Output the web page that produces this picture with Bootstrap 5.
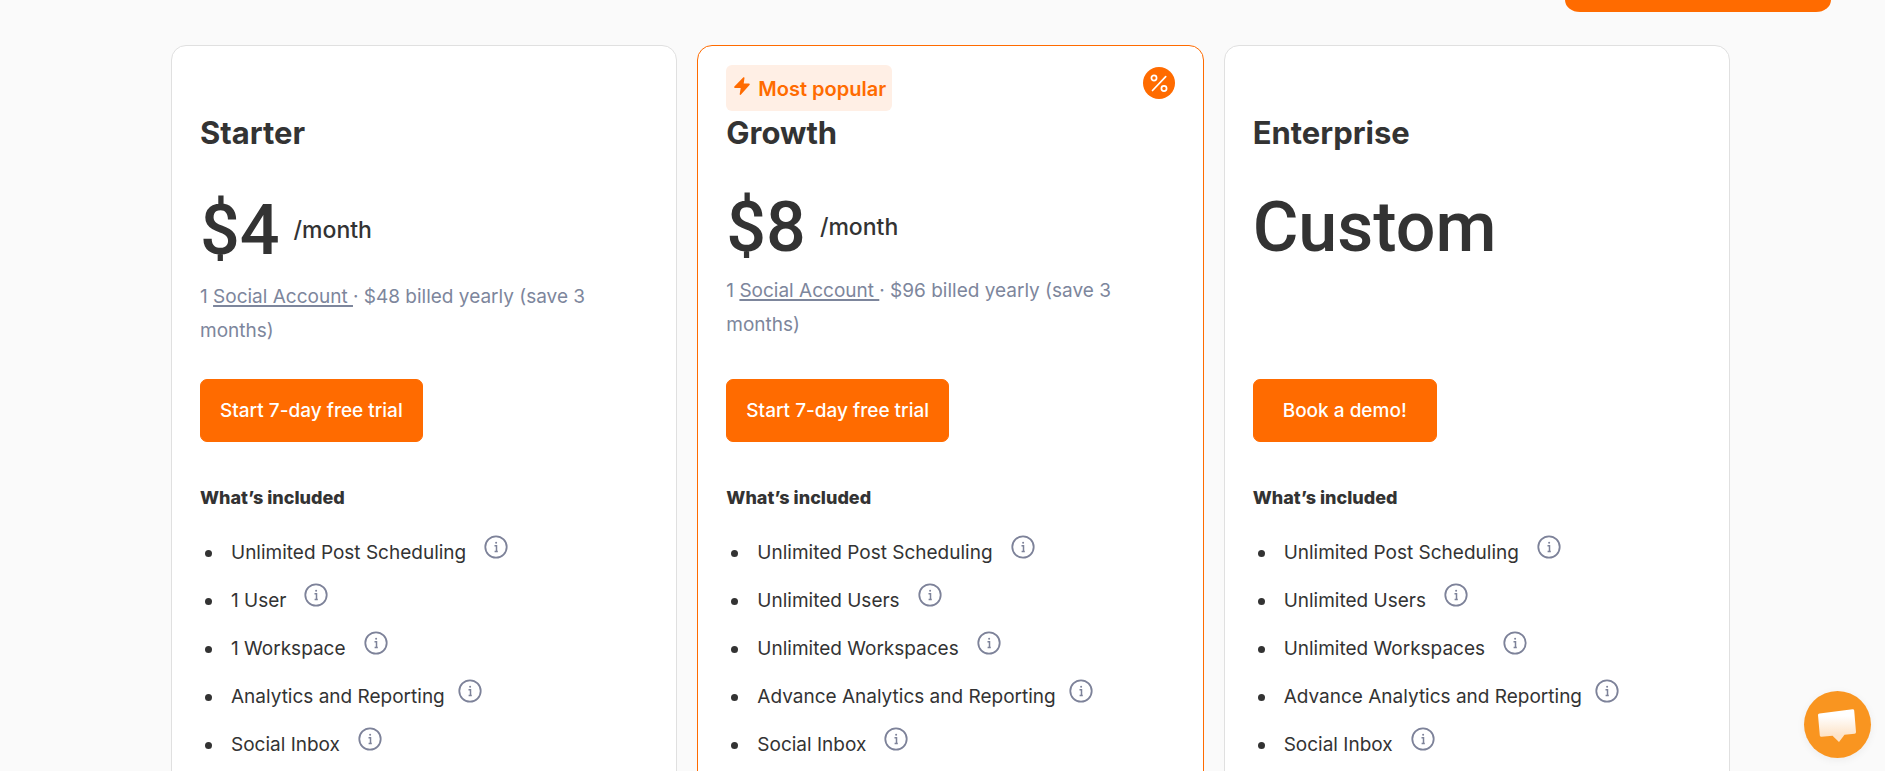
<!DOCTYPE html>
<html lang="en">
<head>
<meta charset="utf-8">
<meta name="viewport" content="width=device-width, initial-scale=1">
<title>Pricing plans</title>
<link href="https://cdn.jsdelivr.net/npm/bootstrap@5.3.0/dist/css/bootstrap.min.css" rel="stylesheet">
<style>
  :root { --brand: #ff6b00; --ink: #333; --muted: #7d869c; }
  body { background: #fafafa; color: var(--ink); font-family: Inter, "DM Sans", sans-serif; font-size: 19px; }
  .top-bar { padding-right: 54px; }
  .top-cta { width: 266px; height: 12px; padding: 0; background: var(--brand); border: 0; border-radius: 0 0 15px 15px / 0 0 12px 12px; }
  .plans { padding: 33px 155px 0 171px; }
  .plan-row { --bs-gutter-x: 20px; }
  .plan { border: 1px solid #e0e0e0; border-radius: 15px; padding: 19px 28px 60px; color: var(--ink); }
  .plan-popular { border-color: var(--brand); }
  .plan-head { height: 46px; margin-bottom: 4px; }
  .popular-tag { height: 46px; padding: 1px 6px 0 8px; gap: 8px; border-radius: 6px; background: #ffefe5; color: var(--brand); font-size: 20px; font-weight: 600; }
  .popular-tag svg { margin-bottom: 6px; }
  .discount { margin-top: 2px; }
  .plan-name { font-size: 31px; line-height: 36px; font-weight: 700; }
  .plan-offer { min-height: 228px; padding-top: 38px; }
  .plan-offer.roomy { padding-top: 41px; }
  .price { height: 76px; gap: 14px; margin-bottom: 9px; }
  .roomy .price { margin-bottom: 12px; }
  .price-amount { font-family: Roboto, sans-serif; font-size: 70px; line-height: 76px; font-weight: 500; }
  .price-period { font-size: 23px; line-height: 28px; font-weight: 500; }
  .plan-note { line-height: 34px; color: var(--muted); }
  .plan-note a { color: inherit; white-space: pre; text-underline-offset: 2px; text-decoration-thickness: 2px; }
  .btn-plan { --bs-btn-color: #fff; --bs-btn-bg: var(--brand); --bs-btn-border-color: var(--brand); --bs-btn-hover-color: #fff; --bs-btn-hover-bg: #e86100; --bs-btn-hover-border-color: #e86100; --bs-btn-border-radius: 7px; --bs-btn-font-size: 19px; --bs-btn-font-weight: 500; --bs-btn-padding-x: 19px; --bs-btn-padding-y: 17px; --bs-btn-line-height: 27px; }
  .btn-wide { --bs-btn-padding-x: 29px; }
  .included { margin: 42px 0 17px; font-size: 18px; line-height: 28px; font-weight: 800; }
  .features li { display: flex; align-items: center; height: 48px; padding-left: 5px; }
  .features li::before { content: ""; width: 7px; height: 7px; margin-right: 19px; border-radius: 50%; background: var(--ink); }
  .info { margin: 0 0 13px 18px; }
  .info-near { margin-left: 13px; }
  .chat { right: 14px; bottom: 13px; width: 67px; height: 67px; padding: 0; border: 0; border-radius: 50%; background: #f99520; box-shadow: 0 2px 8px rgba(0, 0, 0, .06); }
</style>
</head>
<body class="vh-100 overflow-hidden">
<svg class="d-none" aria-hidden="true">
  <symbol id="info" viewBox="0 0 24 24">
    <circle cx="12" cy="12" r="10.700" fill="none" stroke="#7d8299" stroke-width="1.800"/>
    <circle cx="12.100" cy="7.700" r="1" fill="#7d8299"/>
    <path d="M10.500 10.700h2v5.500M10.600 16.400h3.200" fill="none" stroke="#7d8299" stroke-width="1.500"/>
  </symbol>
</svg>

<header class="top-bar d-flex justify-content-end">
  <button class="top-cta" type="button" aria-label="Start free trial"></button>
</header>

<main class="plans">
  <div class="row plan-row">
    <div class="col-4">
      <section class="plan bg-white h-100">
        <div class="plan-head"></div>
        <h2 class="plan-name mb-0">Starter</h2>
        <div class="plan-offer roomy">
          <div class="price d-flex align-items-center"><span class="price-amount">$4</span><span class="price-period">/month</span></div>
          <p class="plan-note mb-0">1 <a href="#">Social Account </a>· $48 billed yearly (save 3 months)</p>
        </div>
        <button class="btn btn-plan" type="button">Start 7-day free trial</button>
        <h3 class="included">What’s included</h3>
        <ul class="features list-unstyled mb-0">
          <li>Unlimited Post Scheduling<svg class="info" width="24" height="24"><use href="#info"/></svg></li>
          <li>1 User<svg class="info" width="24" height="24"><use href="#info"/></svg></li>
          <li>1 Workspace<svg class="info" width="24" height="24"><use href="#info"/></svg></li>
          <li>Analytics and Reporting<svg class="info info-near" width="24" height="24"><use href="#info"/></svg></li>
          <li>Social Inbox<svg class="info" width="24" height="24"><use href="#info"/></svg></li>
        </ul>
      </section>
    </div>

    <div class="col-4">
      <section class="plan plan-popular bg-white h-100">
        <div class="plan-head d-flex justify-content-between">
          <span class="popular-tag d-inline-flex align-items-center">
            <svg width="16" height="18" viewBox="0 0 16 18" aria-hidden="true"><path d="M9.400.3c.5-.4 1.300 0 1.100.7L9.700 6.500h5.200c.9 0 1.200.8.6 1.400L7 17.600c-.6.600-1.500.200-1.300-.6l1-6H1.100C.2 11-.2 10.100.4 9.500Z" fill="#ff6b00"/></svg>
            Most popular
          </span>
          <svg class="discount" width="32" height="32" viewBox="0 0 32 32" role="img" aria-label="Discount">
            <circle cx="16" cy="16" r="16" fill="#ff6b00"/>
            <g fill="none" stroke="#fff" stroke-width="1.700" stroke-linecap="round"><circle cx="11" cy="11" r="2.600"/><circle cx="21" cy="21.500" r="2.600"/><path d="M9.500 23.500 22.700 9.700"/></g>
          </svg>
        </div>
        <h2 class="plan-name mb-0">Growth</h2>
        <div class="plan-offer">
          <div class="price d-flex align-items-center"><span class="price-amount">$8</span><span class="price-period">/month</span></div>
          <p class="plan-note mb-0">1 <a href="#">Social Account </a>· $96 billed yearly (save 3 months)</p>
        </div>
        <button class="btn btn-plan" type="button">Start 7-day free trial</button>
        <h3 class="included">What’s included</h3>
        <ul class="features list-unstyled mb-0">
          <li>Unlimited Post Scheduling<svg class="info" width="24" height="24"><use href="#info"/></svg></li>
          <li>Unlimited Users<svg class="info" width="24" height="24"><use href="#info"/></svg></li>
          <li>Unlimited Workspaces<svg class="info" width="24" height="24"><use href="#info"/></svg></li>
          <li>Advance Analytics and Reporting<svg class="info info-near" width="24" height="24"><use href="#info"/></svg></li>
          <li>Social Inbox<svg class="info" width="24" height="24"><use href="#info"/></svg></li>
        </ul>
      </section>
    </div>

    <div class="col-4">
      <section class="plan bg-white h-100">
        <div class="plan-head"></div>
        <h2 class="plan-name mb-0">Enterprise</h2>
        <div class="plan-offer">
          <div class="price d-flex align-items-center"><span class="price-amount">Custom</span></div>
        </div>
        <button class="btn btn-plan btn-wide" type="button">Book a demo!</button>
        <h3 class="included">What’s included</h3>
        <ul class="features list-unstyled mb-0">
          <li>Unlimited Post Scheduling<svg class="info" width="24" height="24"><use href="#info"/></svg></li>
          <li>Unlimited Users<svg class="info" width="24" height="24"><use href="#info"/></svg></li>
          <li>Unlimited Workspaces<svg class="info" width="24" height="24"><use href="#info"/></svg></li>
          <li>Advance Analytics and Reporting<svg class="info info-near" width="24" height="24"><use href="#info"/></svg></li>
          <li>Social Inbox<svg class="info" width="24" height="24"><use href="#info"/></svg></li>
        </ul>
      </section>
    </div>
  </div>
</main>

<button class="chat position-fixed" type="button" aria-label="Open chat">
  <svg class="d-block" width="67" height="67" viewBox="0 0 67 67" aria-hidden="true">
    <defs><linearGradient id="bubble" x1="0" y1="0" x2="0" y2="1"><stop offset=".2" stop-color="#fff"/><stop offset=".8" stop-color="#fde3c8"/></linearGradient></defs>
    <path d="M15.500 22.500 48.500 18.300q1.500-.2 1.700 1.300L52 41q.1 1.500-1.400 1.700L40.500 43.700 35 51 28.500 44.700 17.500 45.700q-1.500.1-1.700-1.300L14 24.100q-.1-1.400 1.500-1.600Z" fill="url(#bubble)"/>
  </svg>
</button>
<script src="https://cdn.jsdelivr.net/npm/bootstrap@5.3.0/dist/js/bootstrap.bundle.min.js"></script>
</body>
</html>
